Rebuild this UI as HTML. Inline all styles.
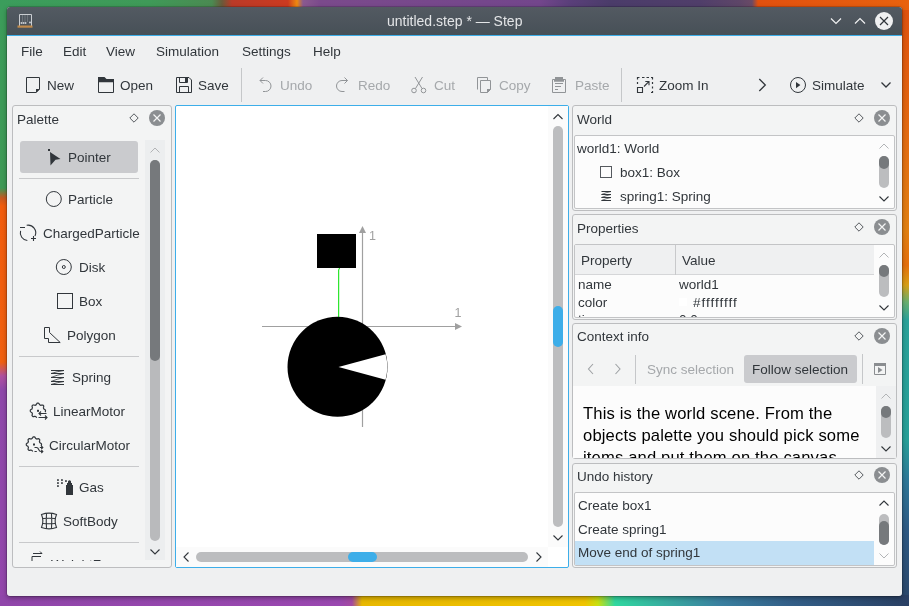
<!DOCTYPE html>
<html><head><meta charset="utf-8">
<style>
*{margin:0;padding:0;box-sizing:border-box}
html,body{width:909px;height:606px;overflow:hidden}
body{position:relative;font-family:"Liberation Sans",sans-serif;background:#7a4a8a}
.a{position:absolute}
.t{position:absolute;font-size:13.5px;line-height:16px;white-space:nowrap;color:#31363b;will-change:transform}
.dis{color:#a5a8ab}
svg{position:absolute;overflow:visible}
</style></head><body>
<!-- wallpaper -->
<div class="a" style="left:0;top:0;width:909px;height:606px;background:linear-gradient(90deg,#3b9d5c 0,#3f9a58 150px,#4b8a52 212px,#6a5a3a 222px,#bb3a28 232px,#cc3a20 288px,#ee8a10 297px,#8a5a90 303px,#7b4a8c 320px,#73468c 540px,#5a3f7a 570px,#4b3c6a 610px,#503e6a 700px,#5e4668 740px,#6a4a66 752px,#e2500e 758px,#e8620e 909px)"></div>
<div class="a" style="left:0;top:10px;width:8px;height:596px;background:linear-gradient(180deg,#3c9c5a 0,#3e9a56 178px,#c85a20 188px,#f25c0c 196px,#f06010 352px,#b050a0 366px,#8e48aa 380px,#9446ac 606px)"></div>
<div class="a" style="left:901px;top:10px;width:8px;height:596px;background:linear-gradient(180deg,#e0520e 0,#e46a10 120px,#e28010 220px,#e6700e 255px,#d8a018 275px,#6ab070 292px,#2ba29a 310px,#27a098 430px,#2e7898 470px,#2e5a84 520px,#2a4466 606px)"></div>
<div class="a" style="left:0;top:595px;width:909px;height:11px;background:linear-gradient(90deg,#9046aa 0,#9a48b0 340px,#a44aa0 352px,#e8b800 362px,#f0c400 585px,#c8e010 598px,#30d8a0 615px,#38a8a0 670px,#3a80a0 720px,#335f88 790px,#2a4064 909px)"></div>

<!-- window -->
<div class="a" style="left:7px;top:7px;width:895px;height:589px;border-radius:3px;box-shadow:0 0 0 0.5px rgba(0,0,0,0.3),0 2px 5px rgba(0,0,0,0.35)"></div>
<div class="a" style="left:7px;top:7px;width:895px;height:589px;background:#eff0f1;border-radius:3px;overflow:hidden">
  <div class="a" style="left:0;top:0;width:895px;height:28px;background:linear-gradient(180deg,#535a62,#475057)"></div>
  <div class="a" style="left:0;top:28px;width:895px;height:1px;background:#3daee9"></div>
</div>

<!-- title bar -->
<svg style="left:0;top:0" width="909" height="40">
  <g stroke="#c9cdd1" stroke-width="1" fill="none">
    <path d="M19.5 26 V14.5 H31.5 V26"/>
    <path d="M22.5 15 V22 M25 15 V22 M27.5 15 V22" stroke="#6d747b"/>
  </g>
  <g fill="#c9cdd1"><circle cx="21.5" cy="23" r="1"/><circle cx="23.5" cy="23" r="1"/><circle cx="25.5" cy="23" r="1"/><circle cx="30" cy="22.5" r="1"/></g>
  <rect x="17.5" y="25.5" width="15" height="2.2" fill="#c08a4a"/>
  <path d="M831 18.5 L836 23.5 L841 18.5" stroke="#eff0f1" stroke-width="1.2" fill="none"/>
  <path d="M855 23.5 L860 18.5 L865 23.5" stroke="#eff0f1" stroke-width="1.2" fill="none"/>
  <circle cx="884" cy="21" r="9" fill="#eff0f1"/>
  <path d="M880 17 L888 25 M888 17 L880 25" stroke="#31363b" stroke-width="1.2"/>
</svg>
<div class="t" style="left:387px;top:13px;font-size:14px;color:#e3e5e7">untitled.step * — Step</div>

<!-- menu -->
<div class="t" style="left:21px;top:44.2px">File</div>
<div class="t" style="left:62.5px;top:44.2px">Edit</div>
<div class="t" style="left:106px;top:44.2px">View</div>
<div class="t" style="left:156px;top:44.2px">Simulation</div>
<div class="t" style="left:242px;top:44.2px">Settings</div>
<div class="t" style="left:312.5px;top:44.2px">Help</div>


<!-- toolbar -->
<svg style="left:0;top:0" width="909" height="110">
  <g stroke="#31363b" stroke-width="1" fill="none">
    <path d="M26.5 77.5 H39.5 V89 L36 92.5 H26.5 Z"/>
    <path d="M98.5 80.5 H113.5 V92.5 H98.5 Z"/>
    <path d="M176.5 77.5 H189 L191.5 80 V92.5 H176.5 Z"/>
    <path d="M179.5 77.5 V82.5 H187.5 V77.5"/>
    <path d="M179.5 92.5 V86.5 H188.5 V92.5"/>
    <path d="M637.5 79.5 V77.5 H639.5 M642 77.5 H644.5 M646.5 77.5 H649 M651 77.5 H652.5 V79.5 M637.5 82 V84 M652.5 82 V84 M652.5 86.5 V88.5 M652.5 91 V92.5 H651" stroke-width="1.2"/>
    <path d="M637.5 87.5 H642.5 V92.5 H637.5 Z" stroke-width="1.1"/>
    <path d="M644 86.5 L648.8 81.7 M645.3 81.5 H649 V85.2" stroke-width="1.1"/>
    <circle cx="798" cy="85" r="7.5"/>
  </g>
  <g fill="#31363b">
    <path d="M36 93 L40 89 H36 Z"/>
    <path d="M98 77 H104.5 L106.5 79 H114 V82.2 H98 Z"/>
    <rect x="185" y="78" width="2" height="4"/>
    <path d="M796 82 V88.2 L800.4 85.1 Z"/>
  </g>
  <g stroke="#31363b" stroke-width="1.3" fill="none">
    <path d="M759.3 79 L765.3 85 L759.3 91"/>
    <path d="M881.5 82.5 L886 87 L890.5 82.5"/>
  </g>
  <g stroke="#919497" stroke-width="1" fill="none">
    <path d="M260 80.5 H265.5 A5.5 5.5 0 0 1 265.5 91.5 H263"/>
    <path d="M263 77.5 L260 80.5 L263 83.5"/>
    <path d="M347.5 80.5 H342 A5.5 5.5 0 0 0 342 91.5 H344.5"/>
    <path d="M344.5 77.5 L347.5 80.5 L344.5 83.5"/>
    <circle cx="414" cy="90.5" r="2.3"/><circle cx="423.5" cy="90.5" r="2.3"/>
    <path d="M415.5 88.5 L422.5 77 M422 88.5 L415 77"/>
    <path d="M477.5 89.5 V77.5 H487.5 V80.5"/>
    <path d="M480.5 80.5 H490.5 V89.5 L487.5 92.5 H480.5 Z"/>
    <path d="M552.5 79.5 H565.5 V92.5 H552.5 Z"/>
    <path d="M555 83.5 H563 M555 86.5 H561 M555 89.5 H558"/>
  </g>
  <g fill="#919497">
    <path d="M487 93 L491 89 H487 Z"/>
    <path d="M555 77 H563 V79 H564 V81.7 H554 V79 H555 Z"/>
  </g>
  <rect x="241" y="68" width="1" height="34" fill="#c5c7c9"/>
  <rect x="621" y="68" width="1" height="34" fill="#c5c7c9"/>
</svg>
<div class="t" style="left:47.4px;top:78.1px">New</div>
<div class="t" style="left:120.2px;top:78.1px">Open</div>
<div class="t" style="left:198.2px;top:78.1px">Save</div>
<div class="t dis" style="left:280.3px;top:78.1px">Undo</div>
<div class="t dis" style="left:358.3px;top:78.1px">Redo</div>
<div class="t dis" style="left:434.4px;top:78.1px">Cut</div>
<div class="t dis" style="left:499.1px;top:78.1px">Copy</div>
<div class="t dis" style="left:574.5px;top:78.1px">Paste</div>
<div class="t" style="left:659.0px;top:78.1px">Zoom In</div>
<div class="t" style="left:812.2px;top:78.1px">Simulate</div>


<!-- ===== dock frames ===== -->
<div class="a" style="left:12px;top:105px;width:160px;height:463px;border:1px solid #bcbdbf;border-radius:3px;background:#f3f4f4"></div>
<div class="a" style="left:572px;top:105px;width:325px;height:106px;border:1px solid #bcbdbf;border-radius:3px;background:#f3f4f4"></div>
<div class="a" style="left:572px;top:214px;width:325px;height:106px;border:1px solid #bcbdbf;border-radius:3px;background:#f3f4f4"></div>
<div class="a" style="left:572px;top:323px;width:325px;height:136px;border:1px solid #bcbdbf;border-radius:3px;background:#f3f4f4"></div>
<div class="a" style="left:572px;top:463px;width:325px;height:105px;border:1px solid #bcbdbf;border-radius:3px;background:#f3f4f4"></div>
<!-- canvas -->
<div class="a" style="left:175px;top:105px;width:394px;height:463px;border:1px solid #3daee9;border-radius:2px;background:#ffffff"></div>

<!-- dock titles -->
<div class="t" style="left:16.7px;top:112.1px">Palette</div>
<div class="t" style="left:576.5px;top:112px">World</div>
<div class="t" style="left:576.5px;top:220.5px">Properties</div>
<div class="t" style="left:576.5px;top:329.3px">Context info</div>
<div class="t" style="left:576.5px;top:468.5px">Undo history</div>
<svg style="left:0;top:0" width="909" height="606">
  <g stroke="#44484d" stroke-width="0.9" fill="none">
    <path d="M134 113.8 L138.2 118 L134 122.2 L129.8 118 Z"/>
    <path d="M859 113.8 L863.2 118 L859 122.2 L854.8 118 Z"/>
    <path d="M859 222.8 L863.2 227 L859 231.2 L854.8 227 Z"/>
    <path d="M859 331.8 L863.2 336 L859 340.2 L854.8 336 Z"/>
    <path d="M859 470.8 L863.2 475 L859 479.2 L854.8 475 Z"/>
  </g>
  <g fill="#8b8e91">
    <circle cx="157" cy="118" r="8"/>
    <circle cx="882" cy="118" r="8"/>
    <circle cx="882" cy="227" r="8"/>
    <circle cx="882" cy="336" r="8"/>
    <circle cx="882" cy="475" r="8"/>
  </g>
  <g stroke="#f3f4f4" stroke-width="1.2">
    <path d="M153.5 114.5 L160.5 121.5 M160.5 114.5 L153.5 121.5"/>
    <path d="M878.5 114.5 L885.5 121.5 M885.5 114.5 L878.5 121.5"/>
    <path d="M878.5 223.5 L885.5 230.5 M885.5 223.5 L878.5 230.5"/>
    <path d="M878.5 332.5 L885.5 339.5 M885.5 332.5 L878.5 339.5"/>
    <path d="M878.5 471.5 L885.5 478.5 M885.5 471.5 L878.5 478.5"/>
  </g>
</svg>


<!-- ===== palette content ===== -->
<div class="a" style="left:20px;top:141px;width:118px;height:32px;border-radius:3px;background:#cacbce"></div>
<div class="a" style="left:145px;top:140px;width:20px;height:420px;background:#eceeef"></div>
<div class="a" style="left:150px;top:160px;width:10px;height:381px;border-radius:5px;background:#b9babc"></div>
<div class="a" style="left:150px;top:160px;width:10px;height:201px;border-radius:5px;background:#76797c"></div>
<div class="a" style="left:19px;top:178px;width:120px;height:1px;background:#c8c9cb"></div>
<div class="a" style="left:19px;top:356px;width:120px;height:1px;background:#c8c9cb"></div>
<div class="a" style="left:19px;top:466px;width:120px;height:1px;background:#c8c9cb"></div>
<div class="a" style="left:19px;top:542px;width:120px;height:1px;background:#c8c9cb"></div>
<div class="a" style="left:13px;top:140px;width:132px;height:420.5px;overflow:hidden">
  <div class="t" style="left:55.4px;top:9.7px">Pointer</div>
  <div class="t" style="left:55.4px;top:52.2px">Particle</div>
  <div class="t" style="left:29.6px;top:86.2px">ChargedParticle</div>
  <div class="t" style="left:65.5px;top:120.2px">Disk</div>
  <div class="t" style="left:66.3px;top:154.2px">Box</div>
  <div class="t" style="left:53.6px;top:188.2px">Polygon</div>
  <div class="t" style="left:58.5px;top:230.2px">Spring</div>
  <div class="t" style="left:39.8px;top:264.2px">LinearMotor</div>
  <div class="t" style="left:35.7px;top:298.2px">CircularMotor</div>
  <div class="t" style="left:66.2px;top:340.2px">Gas</div>
  <div class="t" style="left:50.2px;top:374.2px">SoftBody</div>
  <div class="t" style="left:38px;top:416.5px">WeightForce</div>
</div>
<svg style="left:0;top:0" width="909" height="606">
  <g fill="#31363b">
    <rect x="48" y="149" width="2" height="2"/>
    <path d="M50 152 L60.5 159 L55.5 159.8 L50.5 165.5 Z"/>
  </g>
  <g stroke="#31363b" stroke-width="1" fill="none">
    <circle cx="53.8" cy="199" r="7.5"/>
    <path d="M26.66 225.22 A7.7 7.7 0 0 1 34.98 236.05 M27.33 240.47 A7.7 7.7 0 0 1 20.56 230.81" stroke-width="1.1"/>
    <path d="M20 227.5 H25 M31 238.5 H36 M33.5 236 V241" stroke-width="1.1"/>
    <circle cx="63.8" cy="267" r="7.5"/>
    <circle cx="63.8" cy="267" r="1.5"/>
    <rect x="57.5" y="293.5" width="15" height="15"/>
    <path d="M44.5 327.5 H49.5 V332.5 L60.2 342.5 H48.5 V338.5 H44.5 Z"/>
    <path d="M51 370.5 H64 M51 373.5 H64 M51 377.5 H64 M51 381.5 H64 M51 384.5 H64" stroke-width="1.1"/><path d="M64 370.5 Q57 371.5 51 373.5 M64 373.5 Q57 375 51 377.5 M64 377.5 Q57 379 51 381.5 M64 381.5 Q57 382.5 51 384.5" stroke-width="0.8"/>
    <path d="M36.7 417.8L36.3 417.1L35.9 416.7L35.5 416.5L35.1 416.3L34.5 416.4L33.8 416.6L33.1 416.7L32.6 416.3L32.3 415.9L32.0 415.4L32.2 414.6L32.4 413.9L32.3 413.4L32.1 413.0L31.9 412.6L31.3 412.3L30.7 411.9L30.3 411.3L30.3 410.8L30.3 410.2L30.7 409.7L31.4 409.3L32.0 409.0L32.1 408.6L32.3 408.1L32.4 407.6L32.2 406.9L32.0 406.2L32.3 405.7L32.7 405.3L33.1 404.9L33.8 405.0L34.6 405.2L35.1 405.3L35.5 405.1L36.0 404.9L36.3 404.4L36.7 403.8L37.2 403.2L37.7 403.2L38.3 403.2L38.8 403.4L39.3 404.1L39.6 404.7L40.0 405.0L40.4 405.1L40.8 405.3L41.5 405.1L42.3 405.0L42.9 405.1L43.3 405.4L43.7 405.9L43.7 406.5L43.6 407.2L43.4 407.9L43.6 408.3L43.7 408.7L44.0 409.1L44.7 409.5L45.3 409.9L45.5 410.4L45.5 411.0L45.4 411.6L44.9 412.0" stroke-width="1.2"/>
    <rect x="37" y="409.8" width="2" height="2" fill="#31363b" stroke="none"/>
    <path d="M39 413.5 H46.5 M41 411.5 L39 413.5 L41 415.5 M38.5 417.5 H47 M45 415.5 L47 417.5 L45 419.5" stroke-width="1.1"/>
    <path d="M32.7 451.5L32.3 450.8L31.9 450.4L31.5 450.2L31.1 450.0L30.5 450.1L29.8 450.3L29.1 450.4L28.6 450.0L28.3 449.6L28.0 449.1L28.2 448.3L28.4 447.6L28.3 447.1L28.1 446.7L27.9 446.3L27.3 446.0L26.7 445.6L26.3 445.0L26.3 444.5L26.3 443.9L26.7 443.4L27.4 443.0L28.0 442.7L28.1 442.3L28.3 441.8L28.4 441.3L28.2 440.6L28.0 439.9L28.3 439.4L28.7 439.0L29.1 438.6L29.8 438.7L30.6 438.9L31.1 439.0L31.5 438.8L32.0 438.6L32.3 438.1L32.7 437.5L33.2 436.9L33.7 436.9L34.3 436.9L34.8 437.1L35.3 437.8L35.6 438.4L36.0 438.7L36.4 438.8L36.8 439.0L37.5 438.8L38.3 438.7L38.9 438.8L39.3 439.1L39.7 439.6L39.7 440.2L39.6 440.9L39.4 441.6L39.6 442.0L39.7 442.4L40.0 442.8L40.7 443.2L41.3 443.6L41.5 444.1L41.5 444.7L41.4 445.3L40.9 445.7" stroke-width="1.2"/>
    <rect x="33" y="443.5" width="2" height="2" fill="#31363b" stroke="none"/>
    <path d="M34.5 447.5 H36.5 Q38 447.5 38.7 449.5 Q39.4 451.5 41 451.5 H42.8 M34.5 451.5 H36.8 M39.8 447.5 H42.8 M41.3 446 L42.8 447.5 L41.3 449 M41.3 450 L42.8 451.5 L41.3 453" stroke-width="1.1"/>
    <path d="M41.5 514.5 Q49 511.8 56.5 514.5 Q53.8 521 56.5 527.5 Q49 530.2 41.5 527.5 Q44.2 521 41.5 514.5 Z" stroke-width="1.1"/>
    <path d="M46.5 513.3 Q46 521 46.5 528.7 M51.5 513.3 Q52 521 51.5 528.7 M43 518.5 Q49 518 55 518.5 M43 523.5 Q49 524 55 523.5" stroke-width="1.1"/>
    <path d="M32 561 V556.5 H41 M33 553.5 H42 L40 551.5"/>
  </g>
  <g fill="#31363b">
    <path d="M66 485 H67 V483 H68 V481.3 Q69.5 479 71 481.3 V483 H72 V485 H73 V495 H66 Z"/>
    <rect x="57.1" y="479.2" width="1.7" height="1.7"/><rect x="61.1" y="479.2" width="1.7" height="1.7"/><rect x="65.1" y="480.2" width="1.7" height="1.7"/>
    <rect x="57.1" y="482.2" width="1.7" height="1.7"/><rect x="61.1" y="482.2" width="1.7" height="1.7"/>
    <rect x="57.1" y="485.2" width="1.7" height="1.7"/>
  </g>
  <path d="M150.5 152.5 L155 148 L159.5 152.5" stroke="#b2b4b6" stroke-width="1" fill="none"/>
  <path d="M150.5 549.5 L155 554 L159.5 549.5" stroke="#31363b" stroke-width="1.1" fill="none"/>
</svg>


<!-- ===== canvas content ===== -->
<div class="a" style="left:548px;top:106px;width:20px;height:441px;background:#fbfbfb"></div>
<div class="a" style="left:176px;top:547px;width:372px;height:20px;background:#fbfbfb"></div>
<div class="a" style="left:553px;top:126px;width:10px;height:401px;border-radius:5px;background:#bcbdbf"></div>
<div class="a" style="left:553px;top:305.5px;width:10px;height:41.5px;border-radius:5px;background:#3daee9"></div>
<div class="a" style="left:196px;top:552px;width:332px;height:10px;border-radius:5px;background:#bcbdbf"></div>
<div class="a" style="left:348px;top:552px;width:29px;height:10px;border-radius:5px;background:#3daee9"></div>
<svg style="left:0;top:0" width="909" height="606">
  <g stroke="#31363b" stroke-width="1.1" fill="none">
    <path d="M553.5 119 L558 114.5 L562.5 119"/>
    <path d="M553.5 535.5 L558 540 L562.5 535.5"/>
    <path d="M188.5 552.5 L184 557 L188.5 561.5"/>
    <path d="M536.5 552.5 L541 557 L536.5 561.5"/>
  </g>
  <g stroke="#a0a0a0" stroke-width="1.2" fill="none">
    <path d="M262 326.5 H456"/>
    <path d="M362.5 232 V427"/>
  </g>
  <g fill="#a0a0a0">
    <path d="M462 326.5 L455 323 L455 330 Z"/>
    <path d="M362.5 226 L359 233 L366 233 Z"/>
  </g>
  <text x="369" y="240" font-family="Liberation Sans" font-size="12.5" fill="#a0a0a0">1</text>
  <text x="454.5" y="317" font-family="Liberation Sans" font-size="12.5" fill="#a0a0a0">1</text>
  <rect x="317" y="234" width="39" height="34" fill="#000"/>
  <path d="M339.5 268 L338.7 270 V319.5" stroke="#00e000" stroke-width="1" fill="none"/>
  <circle cx="337.5" cy="366.8" r="50" fill="#000"/>
  <path d="M338.5 367 L385.6 354.3 A49 49 0 0 1 385.6 379.7 Z" fill="#fff"/>
</svg>


<!-- ===== world ===== -->
<div class="a" style="left:574px;top:135px;width:321px;height:74px;border:1px solid #c3c4c6;border-radius:2px;background:#fcfcfc"></div>
<div class="t" style="left:577.3px;top:140.8px">world1: World</div>
<div class="t" style="left:620.4px;top:165.1px">box1: Box</div>
<div class="t" style="left:620.4px;top:188.7px">spring1: Spring</div>
<!-- ===== properties ===== -->
<div class="a" style="left:574px;top:244px;width:321px;height:74px;border:1px solid #c3c4c6;border-radius:2px;background:#fcfcfc;overflow:hidden">
  <div class="a" style="left:0;top:0;width:299px;height:30px;background:#eff0f1;border-bottom:1px solid #d5d6d8"></div>
  <div class="a" style="left:100px;top:0;width:1px;height:30px;background:#c8c9cb"></div>
  <div class="t" style="left:6.3px;top:7.8px">Property</div>
  <div class="t" style="left:107px;top:7.8px">Value</div>
  <div class="t" style="left:3px;top:31.8px">name</div>
  <div class="t" style="left:104px;top:31.8px">world1</div>
  <div class="t" style="left:3px;top:49.6px">color</div>
  <div class="a" style="left:104px;top:53px;width:8px;height:8px;background:#ffffff"></div>
  <div class="t" style="left:118.2px;top:49.6px;letter-spacing:1px">#ffffffff</div>
  <div class="t" style="left:3px;top:67.4px">time</div>
  <div class="t" style="left:104px;top:67.4px">0.0 s</div>
</div>
<!-- ===== context info ===== -->
<div class="a" style="left:573px;top:386px;width:323px;height:72px;background:#fcfcfc;overflow:hidden">
  <div style="position:absolute;left:10px;top:16.5px;width:320px;white-space:nowrap;font-size:16.6px;line-height:22px;letter-spacing:0.15px;color:#000;font-family:'Liberation Sans',sans-serif;will-change:transform">This is the world scene. From the<br>objects palette you should pick some<br>items and put them on the canvas.</div>
</div>
<div class="a" style="left:876px;top:386px;width:19.5px;height:72px;background:#eff0f1"></div>
<div class="a" style="left:744px;top:355px;width:113px;height:28px;border-radius:3px;background:#cacbce"></div>
<div class="t dis" style="left:647.4px;top:361.5px">Sync selection</div>
<div class="t" style="left:751.6px;top:361.5px">Follow selection</div>
<div class="a" style="left:635px;top:354.5px;width:1px;height:29px;background:#c5c7c9"></div>
<div class="a" style="left:862px;top:354px;width:1px;height:30px;background:#c5c7c9"></div>
<!-- ===== undo ===== -->
<div class="a" style="left:574px;top:492px;width:321px;height:74px;border:1px solid #c3c4c6;border-radius:2px;background:#fcfcfc;overflow:hidden">
  <div class="a" style="left:0;top:48px;width:299px;height:24px;background:#c2e0f5"></div>
  <div class="t" style="left:3.3px;top:5px">Create box1</div>
  <div class="t" style="left:3.3px;top:28.7px">Create spring1</div>
  <div class="t" style="left:3.3px;top:52.4px">Move end of spring1</div>
</div>
<!-- scrollbars right -->
<div class="a" style="left:879px;top:156px;width:10px;height:32px;border-radius:5px;background:#bcbdbf"></div>
<div class="a" style="left:879px;top:156px;width:10px;height:13px;border-radius:5px;background:#76797c"></div>
<div class="a" style="left:879px;top:265px;width:10px;height:32px;border-radius:5px;background:#bcbdbf"></div>
<div class="a" style="left:879px;top:265px;width:10px;height:12px;border-radius:5px;background:#76797c"></div>
<div class="a" style="left:881px;top:406px;width:10px;height:31.5px;border-radius:5px;background:#bcbdbf"></div>
<div class="a" style="left:881px;top:406px;width:10px;height:12px;border-radius:5px;background:#76797c"></div>
<div class="a" style="left:879px;top:513.5px;width:10px;height:31px;border-radius:5px;background:#bcbdbf"></div>
<div class="a" style="left:879px;top:521px;width:10px;height:23.5px;border-radius:5px;background:#76797c"></div>
<svg style="left:0;top:0" width="909" height="606">
  <g stroke="#b2b4b6" stroke-width="1" fill="none">
    <path d="M879.5 148.5 L884 144 L888.5 148.5"/>
    <path d="M879.5 257.5 L884 253 L888.5 257.5"/>
    <path d="M881.5 398.5 L886 394 L890.5 398.5"/>
    <path d="M879.5 553.5 L884 558 L888.5 553.5"/>
    <path d="M593 364 L588.5 369 L593 374" stroke="#9ea1a4" stroke-width="1.1"/>
    <path d="M615.5 364 L620 369 L615.5 374" stroke="#9ea1a4" stroke-width="1.1"/>
  </g>
  <g stroke="#31363b" stroke-width="1.1" fill="none">
    <path d="M879.5 196.5 L884 201 L888.5 196.5"/>
    <path d="M879.5 305.5 L884 310 L888.5 305.5"/>
    <path d="M881.5 446.5 L886 451 L890.5 446.5"/>
    <path d="M879.5 505.5 L884 501 L888.5 505.5"/>
  </g>
  <g stroke="#31363b" stroke-width="1" fill="none">
    <rect x="600.5" y="166.5" width="11" height="11" stroke="#55595e"/>
    <path d="M874.5 363.5 H885.5 V374.5 H874.5 Z" stroke="#8a8d90"/><rect x="874" y="363" width="12" height="3" fill="#8a8d90" stroke="none"/>
  </g>
  <path d="M878 367 L882.5 370 L878 373 Z" fill="#8a8d90"/>
  <g stroke="#31363b" fill="none">
    <path d="M601.5 191.5 H611 M601.5 194.5 H611 M601.5 197.5 H611 M601.5 200.5 H611" stroke-width="1"/>
    <path d="M611 191.5 Q606 192.5 601.5 194.5 M611 194.5 Q606 195.5 601.5 197.5 M611 197.5 Q606 198.5 601.5 200.5" stroke-width="0.7"/>
  </g>
</svg>

</body></html>
